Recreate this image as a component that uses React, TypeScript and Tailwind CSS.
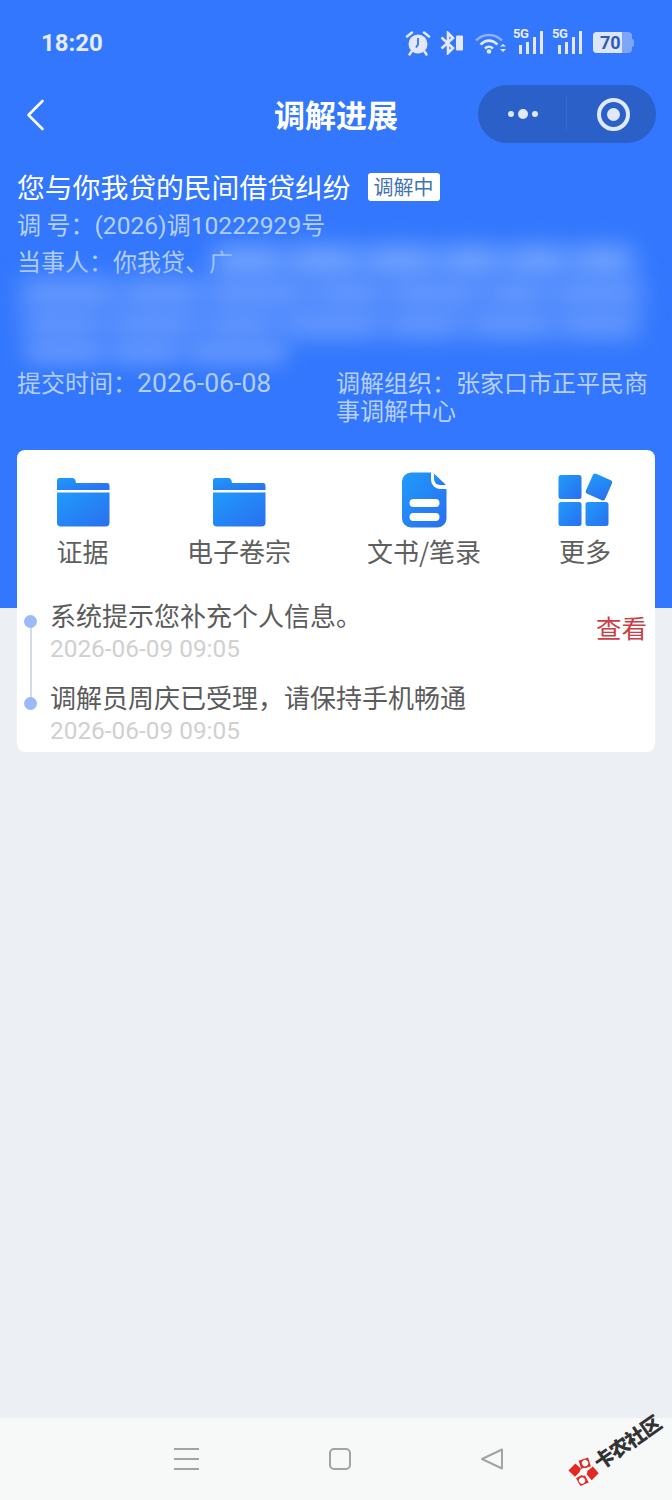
import React from "react";

const F = "font-['Noto_Sans_CJK_SC','Noto_Sans',sans-serif]";
const COLON = "\uFF1A";
const COMMA = "\uFF0C";

function Folder({ id }: { id: string }) {
  return (
    <svg width="54" height="50" viewBox="0 0 54 50">
      <defs>
        <linearGradient id={id} x1="0" y1="0" x2="1" y2="1">
          <stop offset="0" stopColor="#1f9bfb" />
          <stop offset="1" stopColor="#2a6ff0" />
        </linearGradient>
      </defs>
      <path d="M1 13V3.500A2.500 2.500 0 0 1 3.500 1h13a3 3 0 0 1 3 2.500l.5 2.500h31a2.500 2.500 0 0 1 2.500 2.500V13z" fill={`url(#${id})`} />
      <path d="M1 15.500h52.500v30a4 4 0 0 1-4 4H5a4 4 0 0 1-4-4z" fill={`url(#${id})`} />
    </svg>
  );
}

function Doc() {
  return (
    <svg width="45" height="56" viewBox="0 0 45 56">
      <defs>
        <linearGradient id="dg" x1="0" y1="0" x2="1" y2="1">
          <stop offset="0" stopColor="#1f9bfb" />
          <stop offset="1" stopColor="#2a6ff0" />
        </linearGradient>
      </defs>
      <path d="M9 0.500h20v7.500a9 9 0 0 0 9 9h6.500V46.500a9 9 0 0 1-9 9H9a9 9 0 0 1-9-9V9.500a9 9 0 0 1 9-9z" fill="url(#dg)" />
      <path d="M32 1.500 44 13h-6a6 6 0 0 1-6-6z" fill="url(#dg)" />
      <rect x="7.500" y="27" width="30" height="8" rx="4" fill="#fff" />
      <rect x="7.500" y="41" width="30" height="8" rx="4" fill="#fff" />
    </svg>
  );
}

function Grid() {
  return (
    <svg width="54" height="54" viewBox="0 0 54 54">
      <defs>
        <linearGradient id="gg" x1="0" y1="0" x2="1" y2="1">
          <stop offset="0" stopColor="#1f9bfb" />
          <stop offset="1" stopColor="#2a6ff0" />
        </linearGradient>
      </defs>
      <rect x="0.500" y="2" width="23" height="24" rx="2.500" fill="url(#gg)" />
      <rect x="0.500" y="29" width="23" height="24" rx="2.500" fill="url(#gg)" />
      <rect x="27.500" y="29" width="23" height="24" rx="2.500" fill="url(#gg)" />
      <rect x="-10.500" y="-11" width="21" height="22" rx="2.500" fill="url(#gg)" transform="translate(41 14) rotate(24)" />
    </svg>
  );
}

function StatusIcons() {
  return (
    <div className="flex items-center text-[#e6ecfb]">
      <svg width="26" height="26" viewBox="0 0 26 26" fill="none" className="mr-[8px]">
        <circle cx="13" cy="14" r="9.500" fill="#e3e9fa" />
        <path d="M13 8v6.500l-2 3" stroke="#3277fd" strokeWidth="1.800" />
        <path d="M2 6.500 7 2.500M24 6.500 19 2.500M6.500 21.500 4.500 24.500M19.500 21.500 21.500 24.500" stroke="#e3e9fa" strokeWidth="2.500" strokeLinecap="round" />
      </svg>
      <svg width="26" height="24" viewBox="0 0 26 24" fill="none" className="mr-[10px]">
        <path d="M2.500 6.500 14 17l-5 5V2l5 5L2.500 17.500" stroke="#e3e9fa" strokeWidth="2.600" />
        <rect x="17" y="4.500" width="7" height="15" rx="1" fill="#e3e9fa" />
      </svg>
      <svg width="32" height="24" viewBox="0 0 32 24" fill="none" className="mr-[6px]">
        <path d="M1 9.500C8 2 20 2 27 9.500" stroke="#8fb2fb" strokeWidth="2.500" />
        <path d="M5.500 13.500C11 8.500 17 8.500 22.500 13.500" stroke="#e3e9fa" strokeWidth="2.500" />
        <path d="M10 17.500c2.500-2.500 5.500-2.500 8 0" stroke="#e3e9fa" strokeWidth="2.500" />
        <circle cx="14" cy="20.500" r="2.300" fill="#e3e9fa" />
        <path d="M25 15.500h6l-3-2.500zM25 18h6l-3 3z" fill="#e3e9fa" />
      </svg>
      {[0, 1].map((k) => (
        <div key={k} className={`relative w-[31px] h-[26px] -mt-[2px] ${k === 0 ? "mr-[8px]" : "mr-[10px]"}`}>
          <span className="absolute left-0 top-[-2px] text-[13px] leading-[14px] font-bold tracking-[-0.5px] font-['Roboto',sans-serif]">5G</span>
          <svg width="31" height="26" viewBox="0 0 31 26" className="absolute left-0 top-0">
            <rect x="6" y="16" width="3" height="9" fill="#e3e9fa" />
            <rect x="13" y="13" width="3" height="12" fill="#e3e9fa" />
            <rect x="20" y="8" width="3" height="17" fill="#e3e9fa" />
            <rect x="27" y="2" width="3" height="23" fill="#e3e9fa" />
          </svg>
        </div>
      ))}
      <div className="flex items-center">
        <div className="relative w-[39px] h-[21px] rounded-[4px] bg-[#7fa5f8]">
          <div className="w-[29px] h-[21px] rounded-l-[4px] bg-[#dde5fa]" />
          <span className="absolute left-[7px] top-0 leading-[21px] text-[18px] font-bold text-[#2f5bb5] font-['Roboto',sans-serif]">70</span>
        </div>
        <div className="w-[2px] h-[8px] bg-[#7fa5f8] rounded-r-sm" />
      </div>
    </div>
  );
}

function Watermark() {
  return (
    <div className="absolute right-[5px] bottom-[38px] flex items-center -rotate-[35deg] origin-center gap-[2px]">
      <svg width="25" height="25" viewBox="0 0 28 28">
        <path d="M1 3 12 1l2 10L3 13z" fill="#e02a22" />
        <path d="M16 1 27 3 25 13 14 11z" fill="#e02a22" transform="rotate(6 20 7)" />
        <path d="M3 15 13 16l-1 11-10-2z" fill="#e02a22" />
        <path d="M15 16 26 15l1 10-11 2z" fill="#e02a22" />
        <circle cx="14" cy="14" r="4" fill="#fff" />
        <circle cx="7" cy="21" r="3.500" fill="#fff" />
        <circle cx="21" cy="7" r="3.500" fill="#fff" />
      </svg>
      <span className="text-[20px] leading-[24px] font-black text-[#333] tracking-[-1px] font-['Noto_Sans_CJK_SC',sans-serif]">卡农社区</span>
    </div>
  );
}

export default function App() {
  return (
    <div className={`relative w-[672px] h-[1500px] overflow-hidden bg-[#ecf0f4] flex flex-col ${F}`}>
      <div className="h-[608px] shrink-0 bg-[#3277fd]">
        <div className="h-[85px] flex items-center justify-between pl-[41px] pr-[38px]">
          <span className="text-[24px] font-bold text-[#e6ecfb] font-['Roboto',sans-serif]">18:20</span>
          <StatusIcons />
        </div>
        <div className="relative h-[61px] flex items-center justify-center">
          <svg width="20" height="34" viewBox="0 0 20 34" fill="none" className="absolute left-[26px] top-[14px]">
            <path d="M16.500 2 2.500 16l14 14" stroke="#fff" strokeWidth="2.600" strokeLinecap="round" strokeLinejoin="round" />
          </svg>
          <span className="text-[31px] leading-[40px] font-bold text-white -mt-[3px]">调解进展</span>
          <div className="absolute right-[16px] top-0 w-[178px] h-[58px] rounded-full bg-[#2a60c8] flex items-center">
            <div className="w-[89px] h-[36px] border-r border-[#3268d2] flex items-center justify-center gap-[4px] pl-[1px]">
              <span className="w-[6px] h-[6px] rounded-full bg-[#e0e8fa]" />
              <span className="w-[10px] h-[10px] rounded-full bg-[#e0e8fa]" />
              <span className="w-[6px] h-[6px] rounded-full bg-[#e0e8fa]" />
            </div>
            <div className="flex-1 flex items-center justify-center pl-[3px]">
              <div className="w-[33px] h-[33px] rounded-full border-[4px] border-[#e0e8fa] flex items-center justify-center">
                <span className="w-[13px] h-[13px] rounded-full bg-[#e0e8fa]" />
              </div>
            </div>
          </div>
        </div>

        <div className="px-[17px] pt-[19px]">
          <div className="flex items-center h-[42px]">
            <span className="text-[27.800px] leading-[40px] text-white">您与你我贷的民间借贷纠纷</span>
            <span className="ml-[17px] mt-[2px] w-[72px] h-[28px] bg-white rounded-[3px] text-center text-[20px] leading-[27px] text-[#4273b4]">调解中</span>
          </div>
          <div className="text-[24px] leading-[34px] text-[#b6cffc] whitespace-nowrap">
            调 号{COLON}<span className="text-[24.600px] font-['Roboto',sans-serif]">(2026)</span>调<span className="text-[24.600px] font-['Roboto',sans-serif]">10222929</span>号
          </div>
          <div className="relative h-[116px] mt-[1px]">
            <div className="text-[24px] leading-[34px] text-[#b6cffc] whitespace-nowrap">当事人{COLON}你我贷、广</div>
            <div className="absolute left-0 top-[-4px] right-0 h-[124px]">
              <div className="ml-[196px] mt-[8px] h-[32px] flex gap-[6px] blur-[13px]">
                {[70, 70, 70, 60, 60, 60].map((w, i) => (
                  <span key={i} className="h-[26px] rounded-[6px] bg-[#7dabff]" style={{ width: w }} />
                ))}
              </div>
              <div className="ml-[4px] h-[32px] flex gap-[6px] blur-[13px]">
                {[95, 80, 100, 70, 90, 60, 90].map((w, i) => (
                  <span key={i} className="h-[26px] rounded-[6px] bg-[#6f9ffe]" style={{ width: w }} />
                ))}
              </div>
              <div className="ml-[6px] h-[30px] flex gap-[6px] blur-[13px]">
                {[80, 90, 70, 100, 75, 85, 80].map((w, i) => (
                  <span key={i} className="h-[24px] rounded-[6px] bg-[#6f9ffe]" style={{ width: w }} />
                ))}
              </div>
              <div className="ml-[8px] h-[22px] flex gap-[6px] blur-[11px]">
                {[80, 70, 100].map((w, i) => (
                  <span key={i} className="h-[20px] rounded-[6px] bg-[#6f9ffe]" style={{ width: w }} />
                ))}
              </div>
            </div>
          </div>
          <div className="flex mt-[8px] text-[24px] leading-[28px] text-[#b6cffc]">
            <div className="w-[319px] shrink-0">提交时间{COLON}<span className="text-[26.600px] font-['Roboto',sans-serif]">2026-06-08</span></div>
            <div className="w-[318px]">调解组织{COLON}张家口市正平民商事调解中心</div>
          </div>
        </div>
      </div>

      <div className="-mt-[158px] mx-[17px] h-[302px] rounded-[8px] bg-white shrink-0 relative">
        <div className="flex pt-[22px] h-[132px]">
          <div className="w-[131px] flex flex-col items-center">
            <div className="h-[56px] flex items-end pb-[1px]"><Folder id="f1" /></div>
            <span className="mt-[5px] text-[26px] leading-[36px] text-[#5f5f5f]">证据</span>
          </div>
          <div className="w-[114px] ml-[34px] flex flex-col items-center">
            <div className="h-[56px] flex items-end pb-[1px]"><Folder id="f2" /></div>
            <span className="mt-[5px] text-[26px] leading-[36px] text-[#5f5f5f] whitespace-nowrap">电子卷宗</span>
          </div>
          <div className="w-[146px] ml-[55px] flex flex-col items-center">
            <div className="h-[56px] flex items-end"><Doc /></div>
            <span className="mt-[5px] text-[26px] leading-[36px] text-[#5f5f5f] whitespace-nowrap">文书/笔录</span>
          </div>
          <div className="flex-1 flex flex-col items-center pl-[25px] pr-[7px]">
            <div className="h-[56px] flex items-end pb-[1px]"><Grid /></div>
            <span className="mt-[5px] text-[26px] leading-[36px] text-[#5f5f5f] whitespace-nowrap">更多</span>
          </div>
        </div>

        <div className="relative pl-[33px] pr-[8px]">
          <div className="absolute left-[13px] top-[38px] w-[2px] h-[82px] bg-[#d4dbe6]" />
          <div className="h-[82px] flex items-start justify-between relative">
            <div className="absolute -left-[26px] top-[33px] w-[13px] h-[13px] rounded-full bg-[#9abbf8]" />
            <div>
              <div className="text-[26px] leading-[38px] mt-[14px] text-[#5b5b5b]">系统提示您补充个人信息。</div>
              <div className="text-[24.400px] leading-[30px] text-[#d0d0d0] font-['Roboto',sans-serif]">2026-06-09 09:05</div>
            </div>
            <span className="text-[25.500px] leading-[36px] mt-[27px] text-[#cc3d45]">查看</span>
          </div>
          <div className="h-[82px] relative">
            <div className="absolute -left-[26px] top-[33px] w-[13px] h-[13px] rounded-full bg-[#9abbf8]" />
            <div className="text-[26px] leading-[38px] pt-[14px] h-[52px] text-[#5b5b5b]">调解员周庆已受理{COMMA}请保持手机畅通</div>
            <div className="text-[24.400px] leading-[30px] text-[#d0d0d0] font-['Roboto',sans-serif]">2026-06-09 09:05</div>
          </div>
        </div>
      </div>

      <div className="mt-auto h-[82px] bg-[#f7f8f8] shrink-0 flex items-center">
        <div className="ml-[174px] w-[25px] flex flex-col gap-[8px]">
          <span className="h-[2px] bg-[#a3a3a3]" />
          <span className="h-[2px] bg-[#a3a3a3]" />
          <span className="h-[2px] bg-[#a3a3a3]" />
        </div>
        <div className="ml-[130px] w-[22px] h-[22px] rounded-[5px] border-2 border-[#a3a3a3]" />
        <svg width="24" height="24" viewBox="0 0 24 24" fill="none" className="ml-[129px]">
          <path d="M22 2.500v19L2 12z" stroke="#a3a3a3" strokeWidth="2" strokeLinejoin="round" />
        </svg>
      </div>
      <Watermark />
    </div>
  );
}
